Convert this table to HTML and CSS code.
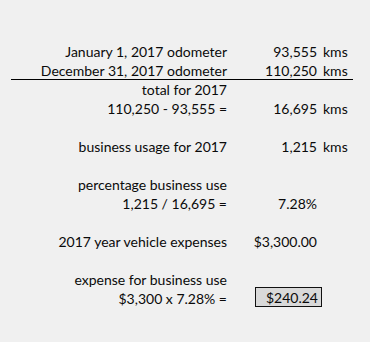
FILE: index.html
```html
<!DOCTYPE html>
<html>
<head>
<meta charset="utf-8">
<link rel="stylesheet" href="styles.css">
</head>
<body>
<div class="sheet">
  <div class="row"><span class="lbl">January 1, 2017 odometer</span><span class="val">93,555</span><span class="unit">kms</span></div>
  <div class="row rule"><span class="lbl">December 31, 2017 odometer</span><span class="val">110,250</span><span class="unit">kms</span></div>
  <div class="row"><span class="lbl">total for 2017</span><span class="val"></span><span class="unit"></span></div>
  <div class="row"><span class="lbl">110,250 - 93,555 =</span><span class="val">16,695</span><span class="unit">kms</span></div>
  <div class="row blank"></div>
  <div class="row"><span class="lbl">business usage for 2017</span><span class="val">1,215</span><span class="unit">kms</span></div>
  <div class="row blank"></div>
  <div class="row"><span class="lbl">percentage business use</span><span class="val"></span><span class="unit"></span></div>
  <div class="row"><span class="lbl">1,215 / 16,695 =</span><span class="val">7.28%</span><span class="unit"></span></div>
  <div class="row blank"></div>
  <div class="row"><span class="lbl">2017 year vehicle expenses</span><span class="val">$3,300.00</span><span class="unit"></span></div>
  <div class="row blank"></div>
  <div class="row"><span class="lbl">expense for business use</span><span class="val"></span><span class="unit"></span></div>
  <div class="row"><span class="lbl">$3,300 x 7.28% =</span><span class="val"><span class="result">$240.24</span></span><span class="unit"></span></div>
</div>
</body>
</html>
```
FILE: styles.css
```css
html, body {
  margin: 0;
  padding: 0;
  background: #f0f0f0;
}
body {
  width: 370px;
  height: 342px;
  font-family: Lato, "Open Sans", sans-serif;
  font-size: 14px;
  color: #0a0a0a;
}
.sheet {
  padding: 42px 0 0 11px;
  width: 342px;
}
.row {
  display: grid;
  grid-template-columns: 216px 95px 31px;
  height: 19px;
  line-height: 19px;
}
.rule {
  border-bottom: 1px solid #000;
  height: 18px;
}
.lbl {
  text-align: right;
  white-space: nowrap;
}
.val {
  text-align: right;
  padding-right: 5px;
  white-space: nowrap;
}
.unit {
  padding-left: 1px;
}
.result {
  display: inline-block;
  box-sizing: border-box;
  width: 67px;
  height: 20px;
  margin-right: -5px;
  margin-top: -2px;
  border: 1px solid #111;
  background: #d9d9d9;
  padding-right: 3px;
  line-height: 20px;
  vertical-align: top;
}
```
